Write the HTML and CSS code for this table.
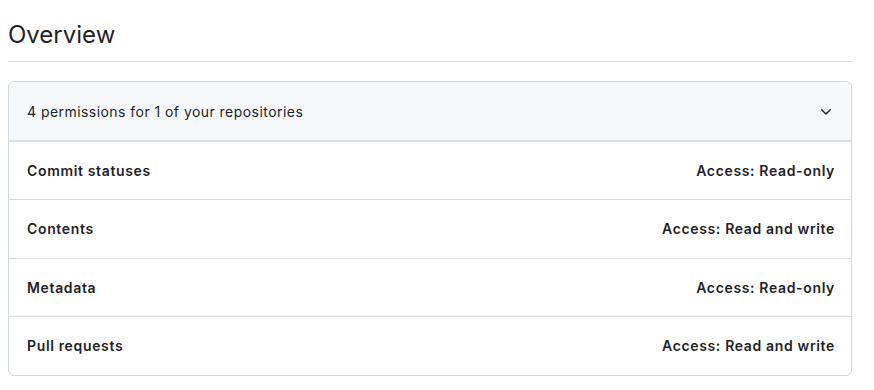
FILE: index.html
```html
<!DOCTYPE html>
<html lang="en">
<head>
    <meta charset="UTF-8">
    <meta name="viewport" content="width=device-width, initial-scale=1.0">
    <title>Overview</title>
    <link rel="stylesheet" href="styles.css">
</head>
<body>
    <div class="page">
        <h2 class="section-title">Overview</h2>

        <div class="perm-box">
            <div class="perm-header">
                <span>4 permissions for 1 of your repositories</span>
                <svg class="chevron" width="16" height="16" viewBox="0 0 16 16" aria-hidden="true">
                    <path d="M12.78 5.22a.749.749 0 0 1 0 1.06l-4.25 4.25a.749.749 0 0 1-1.06 0L3.22 6.28a.749.749 0 1 1 1.06-1.06L8 8.939l3.72-3.719a.749.749 0 0 1 1.06 0Z"></path>
                </svg>
            </div>
            <div class="perm-row">
                <span>Commit statuses</span>
                <span>Access: Read-only</span>
            </div>
            <div class="perm-row">
                <span>Contents</span>
                <span>Access: Read and write</span>
            </div>
            <div class="perm-row">
                <span>Metadata</span>
                <span>Access: Read-only</span>
            </div>
            <div class="perm-row">
                <span>Pull requests</span>
                <span>Access: Read and write</span>
            </div>
        </div>
    </div>
</body>
</html>
```

FILE: styles.css
```css
body {
    margin: 0;
    font-family: Inter, "Liberation Sans", Arial, sans-serif;
    color: #1f2328;
    background-color: #ffffff;
}
.page {
    padding: 17px 22px 0 8px;
}
.section-title {
    margin: 0 0 19px;
    padding-bottom: 8px;
    font-size: 24px;
    font-weight: 400;
    line-height: 36px;
    border-bottom: 1px solid #d8dee4;
}
.perm-box {
    border: 1px solid #d0d7de;
    border-radius: 6px;
    overflow: hidden;
}
.perm-header {
    display: flex;
    justify-content: space-between;
    align-items: center;
    padding: 19px 17px 18px 18px;
    background-color: #f6f8fa;
    border-bottom: 2px solid #d8dee4;
    font-size: 14px;
    line-height: 21px;
    letter-spacing: 0.45px;
}
.chevron {
    fill: #1f2328;
}
.perm-row {
    display: flex;
    justify-content: space-between;
    align-items: center;
    padding: 18px 16px 18px 18px;
    font-size: 14px;
    font-weight: 600;
    line-height: 21px;
    letter-spacing: 0.65px;
    border-bottom: 1px solid #d8dee4;
}
/* every second row is a pixel taller */
.perm-row:nth-child(odd) {
    padding-bottom: 19px;
}
.perm-row:last-child {
    border-bottom: none;
}
```
